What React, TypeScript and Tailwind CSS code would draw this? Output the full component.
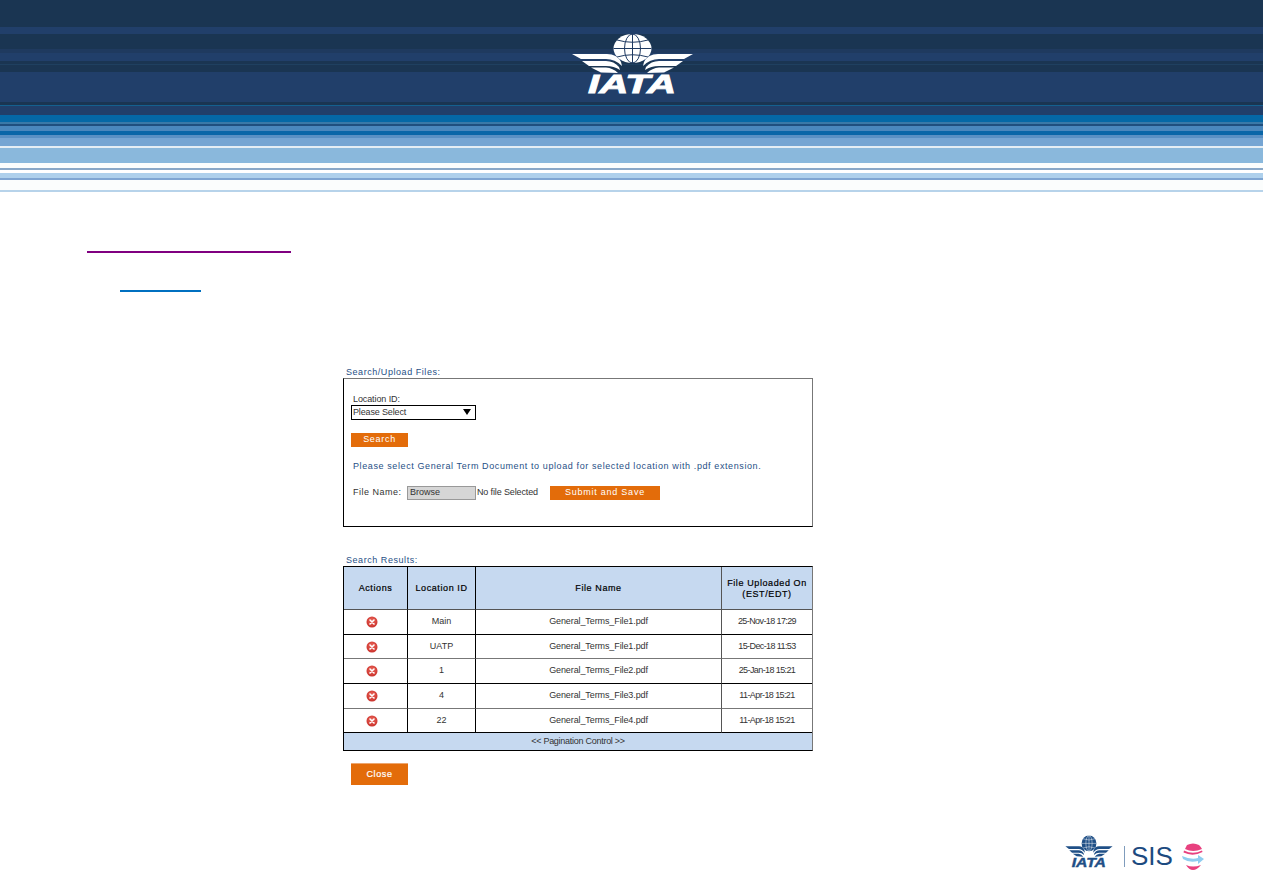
import React from "react";

const bands = [
  "h-[27px] bg-[#1a3552]",
  "h-[7px] bg-[#213f6a]",
  "h-[15px] bg-[#1a3552]",
  "h-[4px] bg-[#1f3a5f]",
  "h-[8px] bg-[#213f6a]",
  "h-[3px] bg-[#1a3552]",
  "h-[1px] bg-[#1f4060]",
  "h-[7px] bg-[#1a3552]",
  "h-[30px] bg-[#213f6a]",
  "h-[3px] bg-[#1a3552]",
  "h-[1px] bg-[#14608f]",
  "h-[9px] bg-[#213f6a]",
  "h-[7px] bg-[#0568a6]",
  "h-[2px] bg-[#3a79a8]",
  "h-[2px] bg-[#1f4f7f]",
  "h-[5px] bg-[#4a87bd]",
  "h-[4px] bg-[#0a66a8]",
  "h-[3px] bg-[#5a90c4]",
  "h-[8px] bg-[#75a5d3]",
  "h-[2px] bg-[#e5eef5]",
  "h-[15px] bg-[#8ab8dc]",
  "h-[5px] bg-[#fbfdfd]",
  "h-[2px] bg-[#8aa8c8]",
  "h-[3px] bg-[#ffffff]",
  "h-[5px] bg-[#aed0ec]",
  "h-[2px] bg-[#7fa5d2]",
  "h-[10px] bg-[#fbfdfd]",
  "h-[2px] bg-[#b7d3ea]",
];

const rows = [
  { id: "Main", file: "General_Terms_File1.pdf", date: "25-Nov-18 17:29", line: "border-b-black", h: "h-[25px]" },
  { id: "UATP", file: "General_Terms_File1.pdf", date: "15-Dec-18 11:53", line: "border-b-[#777777]", h: "h-[24px]" },
  { id: "1", file: "General_Terms_File2.pdf", date: "25-Jan-18 15:21", line: "border-b-black", h: "h-[25px]" },
  { id: "4", file: "General_Terms_File3.pdf", date: "11-Apr-18 15:21", line: "border-b-[#777777]", h: "h-[25px]" },
  { id: "22", file: "General_Terms_File4.pdf", date: "11-Apr-18 15:21", line: "border-b-black", h: "h-[24px]" },
];

function IataLogo({ color, bg, className }: { color: string; bg: string; className: string }) {
  return (
    <svg viewBox="0 0 123 61" preserveAspectRatio="none" className={`overflow-visible ${className}`}>
      {/* globe */}
      <ellipse cx="61.5" cy="15.5" rx="19" ry="14.5" fill={color} />
      <g fill="none" stroke={bg} strokeWidth="1">
        <ellipse cx="61.5" cy="15.5" rx="8" ry="14.5" />
        <line x1="61.5" y1="1" x2="61.5" y2="30" />
        <line x1="42.5" y1="15.5" x2="80.5" y2="15.5" />
        <path d="M46 7 Q61.5 11.5 77 7" />
        <path d="M46 24 Q61.5 19.5 77 24" />
      </g>
      {/* left wing */}
      <g fill={color}>
        <path d="M1 21 H36 Q46 21 50 29 L51 33 Q44 26 35 26 H10 Z" />
        <path d="M11 28 H35 Q43 28 48 34 L49 37 Q43 33 35 33 H18 Z" />
        <path d="M20 34.5 H35 Q42 35 47 40 Q40 39.5 30 39.5 Z" />
        {/* right wing */}
        <path d="M122 21 H87 Q77 21 73 29 L72 33 Q79 26 88 26 H113 Z" />
        <path d="M112 28 H88 Q80 28 75 34 L74 37 Q80 33 88 33 H105 Z" />
        <path d="M103 34.5 H88 Q81 35 76 40 Q83 39.5 93 39.5 Z" />
      </g>
      <text
        x="17"
        y="60"
        textLength="88"
        lengthAdjust="spacingAndGlyphs"
        fill={color}
        stroke={color}
        strokeWidth="0.8"
        fontFamily="'Liberation Sans', sans-serif"
        fontSize="25"
        fontWeight="700"
        fontStyle="italic"
      >
        IATA
      </text>
    </svg>
  );
}

function DeleteIcon() {
  return (
    <svg viewBox="0 0 12 12" className="ml-[22px] block h-[12px] w-[12px]">
      <defs>
        <radialGradient id="del" cx="50%" cy="40%" r="60%">
          <stop offset="0%" stopColor="#ee6a5f" />
          <stop offset="100%" stopColor="#c9302a" />
        </radialGradient>
      </defs>
      <circle cx="6" cy="6" r="5.5" fill="url(#del)" />
      <path d="M4 4 L8 8 M8 4 L4 8" stroke="#ffffff" strokeWidth="1.6" strokeLinecap="round" />
    </svg>
  );
}

function SisGlobe() {
  return (
    <svg viewBox="0 0 24 28" className="h-[28px] w-[24px]">
      <g fill="#e8417f">
        <path d="M6 3 Q12 0 18 3 Q20 5 21 7 Q12 11 4 7 Z" />
        <path d="M3 8.5 Q12 13 21 8.5 L21.5 10 Q12 15 2.5 10.5 Z" />
        <path d="M5 23 Q12 26 20 23 Q16 28 12 28 Q8 28 5 23 Z" />
      </g>
      <path d="M1 14 Q10 18 17 16 L17 13 L23 17 L17 22 L17 19 Q8 21 2 17 Z" fill="#8fcdf0" />
    </svg>
  );
}

const th = "border-b border-b-[#555555] pt-[2px] text-[9px] font-normal text-black [-webkit-text-stroke:0.2px_black]";
const td = "border-b text-[9px] text-[#333333] text-center";

export default function App() {
  return (
    <div className="relative h-[893px] w-full overflow-hidden bg-white font-['Liberation_Sans',Arial,sans-serif]">
      <header className="relative flex flex-col">
        {bands.map((b, i) => (
          <div key={i} className={b} />
        ))}
        <IataLogo color="#ffffff" bg="#1f3a62" className="absolute left-[571px] top-[33px] h-[61px] w-[123px]" />
      </header>

      <div className="ml-[87px] mt-[59px] h-[2px] w-[204px] bg-[#800080]" />
      <div className="ml-[120px] mt-[37px] h-[2px] w-[81px] bg-[#0070c0]" />

      <main className="ml-[343px] mt-[74px] w-[470px]">
        <h2 className="ml-[3px] h-[12px] text-[9px] leading-[12px] tracking-[0.55px] text-[#1f4f86]">Search/Upload Files:</h2>
        <section className="h-[149px] border border-black border-t-[#777777] border-r-[#777777] pl-[7px]">
          <div className="ml-[2px] mt-[15px] text-[9px] leading-[11px] tracking-[-0.1px] text-[#333333]">Location ID:</div>
          <div className="relative flex h-[15px] w-[125px] items-center border border-black pl-[1px] text-[9px] tracking-[-0.15px] text-[#333333]">
            Please Select
            <span className="absolute right-[4px] top-[3px] h-0 w-0 border-x-[4px] border-t-[6px] border-x-transparent border-t-black" />
          </div>
          <button className="mt-[13px] block h-[14px] w-[57px] bg-[#e36c0a] text-[9px] tracking-[0.7px] text-white">Search</button>
          <p className="ml-[2px] mt-[13px] h-[12px] text-[9px] leading-[12px] tracking-[0.6px] text-[#1f4f86]">
            Please select General Term Document to upload for selected location with .pdf extension.
          </p>
          <div className="ml-[2px] mt-[14px] flex h-[14px] items-center text-[9px] text-[#333333]">
            <span className="w-[54px] tracking-[0.5px]">File Name:</span>
            <span className="flex h-[14px] w-[69px] items-center border border-[#999999] bg-[#d6d6d6] pl-[2px]">Browse</span>
            <span className="ml-[1px] w-[73px] tracking-[-0.13px]">No file Selected</span>
            <button className="h-[14px] w-[110px] bg-[#e36c0a] tracking-[0.75px] text-white">Submit and Save</button>
          </div>
        </section>

        <h2 className="ml-[3px] mt-[27px] h-[12px] text-[9px] leading-[12px] tracking-[0.55px] text-[#1f4f86]">Search Results:</h2>
        <table className="w-[470px] table-fixed border-separate border-spacing-0 border border-black border-r-[#777777]">
          <colgroup>
            <col className="w-[64px]" />
            <col className="w-[68px]" />
            <col className="w-[246px]" />
            <col />
          </colgroup>
          <thead>
            <tr className="h-[43px] bg-[#c6d9f0]">
              <th className={`${th} border-r border-r-black tracking-[0.6px]`}>Actions</th>
              <th className={`${th} border-r border-r-black tracking-[0.6px]`}>Location ID</th>
              <th className={`${th} border-r border-r-[#555555] tracking-[0.6px]`}>File Name</th>
              <th className={`${th} leading-[11px] tracking-[0.6px]`}>
                File Uploaded On
                <br />
                (EST/EDT)
              </th>
            </tr>
          </thead>
          <tbody>
            {rows.map((r) => (
              <tr key={r.date + r.file} className={r.h}>
                <td className={`${td} ${r.line} border-r border-r-black`}>
                  <DeleteIcon />
                </td>
                <td className={`${td} ${r.line} border-r border-r-black`}>{r.id}</td>
                <td className={`${td} ${r.line} border-r border-r-[#555555] tracking-[-0.1px]`}>{r.file}</td>
                <td className={`${td} ${r.line} tracking-[-0.6px]`}>{r.date}</td>
              </tr>
            ))}
            <tr className="h-[17px] bg-[#c6d9f0]">
              <td colSpan={4} className="text-center text-[9px] tracking-[-0.27px] text-[#333333]">
                &lt;&lt; Pagination Control &gt;&gt;
              </td>
            </tr>
          </tbody>
        </table>
        <button className="ml-[8px] mt-[12px] block h-[22px] w-[57px] border-t border-t-[#eda66f] bg-[#e36c0a] text-[9px] tracking-[0.6px] text-white [-webkit-text-stroke:0.2px_white]">
          Close
        </button>
      </main>

      <footer className="absolute left-[1065px] top-[835px] flex items-start">
        <IataLogo color="#1f4f86" bg="#ffffff" className="h-[33px] w-[48px]" />
        <div className="ml-[11px] mt-[11px] h-[21px] w-px bg-[#7f9cbc]" />
        <span className="ml-[6px] mt-[6px] text-[26px] leading-[30px] text-[#1c4a80]">SIS</span>
        <div className="ml-[8px] mt-[7px]">
          <SisGlobe />
        </div>
      </footer>
    </div>
  );
}
